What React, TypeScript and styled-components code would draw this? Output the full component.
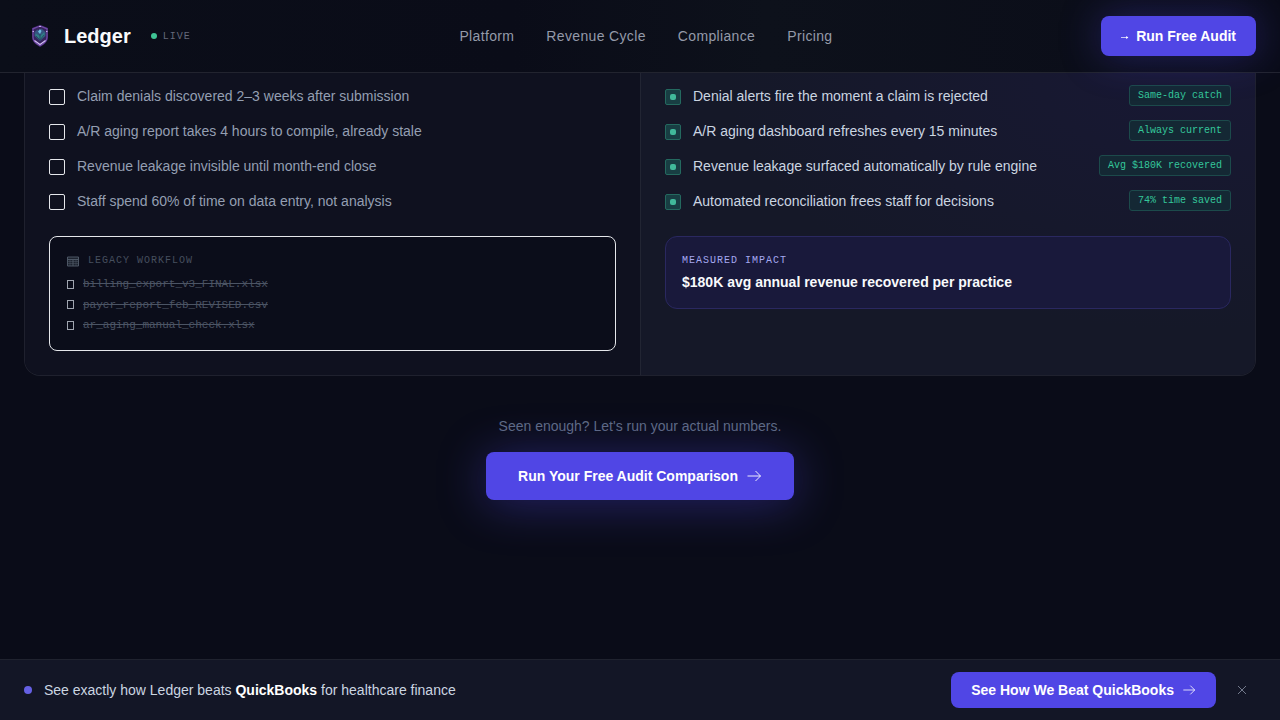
import React from "react";
import styled, { createGlobalStyle } from "styled-components";

const sans = `"Liberation Sans", Arial, sans-serif`;
const mono = `"Liberation Mono", "Courier New", monospace`;

const GlobalStyle = createGlobalStyle`
  *, *::before, *::after { box-sizing: border-box; }
  body { margin: 0; background: #0a0c18; color: #f1f5f9; font-family: ${sans}; font-size: 14px; line-height: 22px; }
  button, input { font: inherit; margin: 0; }
  ul { list-style: none; margin: 0; padding: 0; }
  p { margin: 0; }
`;

const Page = styled.div`
  display: flex;
  flex-direction: column;
  min-height: 100vh;
`;

const Header = styled.header`
  position: sticky;
  top: 0;
  z-index: 2;
  display: flex;
  align-items: center;
  justify-content: space-between;
  padding: 16px 24px;
  background: linear-gradient(90deg, #0b0e19, #0a0c18 40%, #0d111b 60%, #0a0c18);
  border-bottom: 1px solid #22242f;
`;

const Brand = styled.a`
  display: flex;
  align-items: center;
  gap: 8px;
  color: #f8fafc;
  font-size: 20px;
  font-weight: 700;
  line-height: 28px;
  text-decoration: none;
`;

const BrandGroup = styled.div`
  display: flex;
  align-items: center;
  gap: 20px;
`;

const Live = styled.span`
  display: flex;
  align-items: center;
  gap: 6px;
  color: #64687a;
  font: 10px/15px ${mono};
  letter-spacing: 1px;
`;

const Dot = styled.span<{ $size: number; $color: string }>`
  flex: none;
  width: ${(p) => p.$size}px;
  height: ${(p) => p.$size}px;
  border-radius: 50%;
  background: ${(p) => p.$color};
`;

const Nav = styled.nav`
  display: flex;
  gap: 32px;
`;

const NavLink = styled.a`
  color: #949aa9;
  letter-spacing: 0.025em;
  text-decoration: none;
`;

const PrimaryButton = styled.button<{ $height: number; $pad: number; $glow?: string }>`
  display: inline-flex;
  align-items: center;
  gap: 8px;
  height: ${(p) => p.$height}px;
  padding: 0 ${(p) => p.$pad}px;
  border: 0;
  border-radius: 8px;
  background: #5046e5;
  box-shadow: ${(p) => p.$glow || "none"};
  color: #fff;
  font-weight: 700;
  white-space: nowrap;
  cursor: pointer;
`;

const Main = styled.main`
  flex: 1;
  padding: 0 24px;
`;

const Comparison = styled.section`
  display: grid;
  grid-template-columns: 1fr 1fr;
  overflow: hidden;
  border: 1px solid #1f212e;
  border-top: 0;
  border-radius: 0 0 16px 16px;
`;

const Column = styled.div<{ $after?: boolean }>`
  display: flex;
  flex-direction: column;
  gap: 24px;
  padding: 11px 24px 24px;
  background: ${(p) =>
    p.$after
      ? "radial-gradient(ellipse at 90% 0, #181834 0, #151828 60%)"
      : "#0f111f"};
  ${(p) => p.$after && "border-left: 1px solid #222533;"}
`;

const CheckList = styled.ul`
  display: flex;
  flex-direction: column;
  gap: 12px;
`;

const CheckItem = styled.li`
  display: flex;
  align-items: center;
  justify-content: space-between;
  gap: 12px;
  min-height: 23px;
`;

const CheckLabel = styled.label<{ $after?: boolean }>`
  display: flex;
  align-items: center;
  gap: 12px;
  color: ${(p) => (p.$after ? "#cbd5e1" : "#949fb2")};
`;

const Tick = styled.input`
  appearance: none;
  display: grid;
  place-items: center;
  flex: none;
  width: 16px;
  height: 16px;
  margin-top: 3px;
  border: 1px solid #e5e7eb;
  border-radius: 2px;
  &:checked {
    border-color: #24695f;
    background: #183e43;
  }
  &:checked::before {
    content: "";
    width: 6px;
    height: 6px;
    border-radius: 2px;
    background: #41b99a;
  }
`;

const Badge = styled.span`
  padding: 2px 8px;
  border: 1px solid #1c4a4b;
  border-radius: 3px;
  background: #142834;
  color: #34c79b;
  font: 10px/15px ${mono};
  white-space: nowrap;
`;

const LegacyPanel = styled.div`
  padding: 16px;
  border: 1px solid #e5e7eb;
  border-radius: 8px;
  background: #0b0d1a;
`;

const ImpactPanel = styled.div`
  padding: 16px;
  border: 1px solid #2a2860;
  border-radius: 12px;
  background: #19193b;
`;

const PanelTitle = styled.p<{ $color: string; $gap: number }>`
  display: flex;
  align-items: center;
  gap: 8px;
  margin-bottom: ${(p) => p.$gap}px;
  color: ${(p) => p.$color};
  font: 10px/15px ${mono};
  letter-spacing: 1px;
`;

const FileList = styled.ul`
  display: flex;
  flex-direction: column;
  gap: 4px;
`;

const FileItem = styled.li`
  display: flex;
  align-items: center;
  gap: 9px;
  padding-left: 1px;
  color: #4b5464;
  font: 11px/1.5 ${mono};
`;

const FileBox = styled.span`
  width: 7px;
  height: 9px;
  border: 1px solid #a0a5b0;
`;

const Impact = styled.p`
  color: #f8fafc;
  font-weight: 700;
  line-height: 20px;
`;

const Cta = styled.section`
  display: flex;
  flex-direction: column;
  align-items: center;
  gap: 15px;
  padding: 39px 0 48px;
  color: #5f6b83;
`;

const Promo = styled.footer`
  position: sticky;
  bottom: 0;
  display: flex;
  align-items: center;
  justify-content: space-between;
  padding: 12px 24px;
  border-top: 1px solid #20232f;
  background: #131626;
`;

const PromoGroup = styled.div`
  display: flex;
  align-items: center;
  gap: 12px;
`;

const PromoText = styled.p`
  color: #cbd5e1;
  strong { color: #fff; }
`;

const CloseButton = styled.button`
  display: grid;
  place-items: center;
  width: 28px;
  height: 28px;
  padding: 0;
  border: 0;
  background: none;
  color: #7d8596;
  cursor: pointer;
`;

const Arrow = ({ size }: { size: number }) => (
  <svg width={size} height={size} viewBox="0 0 16 16" fill="none" stroke="currentColor" strokeWidth="0.9" strokeLinejoin="round" aria-hidden="true">
    <path d="M1.500 8h13M9.500 3l5 5-5 5" />
  </svg>
);

const SmallArrow = () => (
  <svg width="7" height="8" viewBox="0 0 7 8" overflow="visible" fill="none" stroke="currentColor" strokeWidth="0.7" aria-hidden="true">
    <path d="M0 5.500h6.500" />
    <path d="M5.200 4 7.400 5.500 5.200 7z" fill="currentColor" stroke="none" />
  </svg>
);

const Shield = () => (
  <svg width="32" height="32" viewBox="0 0 32 32" fill="none" aria-hidden="true">
    <path d="M16 4.800 8 8v9.200c0 4.300 3.400 7.200 8 9.800 4.600-2.600 8-5.500 8-9.800V8z" fill="#35245c" />
    <path d="M16 6 9 8.800v8.400c0 3.800 3 6.400 7 8.600 4-2.200 7-4.800 7-8.600V8.800z" stroke="#7047a6" strokeWidth="1.300" />
    <path d="m10.500 12 3-2.500 2 2 2-3 4 3.500v4L16 21l-5.500-5z" fill="#355580" />
    <path d="m11.500 13.500 4.500 2.500 4.500-4v4L16 20l-4.500-4z" fill="#2f7f86" />
    <path d="m14 11.500 2-2.500 1.500 2-1.500 3z" fill="#6cbbe0" />
    <path d="m12 16 4 4 4-5M16 14v5" stroke="#27405c" strokeWidth=".8" />
    <path d="m10.500 20.500 5.500 4 5.500-4" stroke="#d3bdf5" strokeWidth="1.100" />
    <path d="M8.500 11.500H10M22 11.500h1.500M15 6.500h2" stroke="#c4a8e8" />
  </svg>
);

const Sheet = () => (
  <svg width="14" height="14" viewBox="0 0 14 14" fill="none" stroke="#4c5665" aria-hidden="true">
    <path d="M1.500 3h11v9h-11z" fill="#1d232f" />
    <path d="M1.500 5.500h11M7 5.500V12" />
    <path d="M4 5.500V12M10 5.500V12M2 7.500h10M2 9.500h10" strokeWidth=".5" />
  </svg>
);

const before = [
  "Claim denials discovered 2–3 weeks after submission",
  "A/R aging report takes 4 hours to compile, already stale",
  "Revenue leakage invisible until month-end close",
  "Staff spend 60% of time on data entry, not analysis",
];

const after = [
  ["Denial alerts fire the moment a claim is rejected", "Same-day catch"],
  ["A/R aging dashboard refreshes every 15 minutes", "Always current"],
  ["Revenue leakage surfaced automatically by rule engine", "Avg $180K recovered"],
  ["Automated reconciliation frees staff for decisions", "74% time saved"],
];

const files = ["billing_export_v3_FINAL.xlsx", "payer_report_feb_REVISED.csv", "ar_aging_manual_check.xlsx"];

export default function App() {
  return (
    <Page>
      <GlobalStyle />
      <Header>
        <BrandGroup>
          <Brand href="#">
            <Shield />
            Ledger
          </Brand>
          <Live>
            <Dot $size={6} $color="#3fc495" />
            LIVE
          </Live>
        </BrandGroup>
        <Nav>
          {["Platform", "Revenue Cycle", "Compliance", "Pricing"].map((n) => (
            <NavLink key={n} href="#">{n}</NavLink>
          ))}
        </Nav>
        <PrimaryButton $height={40} $pad={20} $glow="0 0 40px rgba(79, 70, 229, 0.35)">
          <SmallArrow />
          Run Free Audit
        </PrimaryButton>
      </Header>

      <Main>
        <Comparison>
          <Column>
            <CheckList>
              {before.map((t) => (
                <CheckItem key={t}>
                  <CheckLabel>
                    <Tick type="checkbox" />
                    {t}
                  </CheckLabel>
                </CheckItem>
              ))}
            </CheckList>
            <LegacyPanel>
              <PanelTitle $color="#464f5e" $gap={8}>
                <Sheet />
                LEGACY WORKFLOW
              </PanelTitle>
              <FileList>
                {files.map((f) => (
                  <FileItem key={f}>
                    <FileBox />
                    <s>{f}</s>
                  </FileItem>
                ))}
              </FileList>
            </LegacyPanel>
          </Column>
          <Column $after>
            <CheckList>
              {after.map(([t, badge]) => (
                <CheckItem key={t}>
                  <CheckLabel $after>
                    <Tick type="checkbox" defaultChecked />
                    {t}
                  </CheckLabel>
                  <Badge>{badge}</Badge>
                </CheckItem>
              ))}
            </CheckList>
            <ImpactPanel>
              <PanelTitle $color="#a5a8f0" $gap={4}>MEASURED IMPACT</PanelTitle>
              <Impact>$180K avg annual revenue recovered per practice</Impact>
            </ImpactPanel>
          </Column>
        </Comparison>

        <Cta>
          <p>Seen enough? Let's run your actual numbers.</p>
          <PrimaryButton $height={48} $pad={32} $glow="0 4px 48px rgba(79, 70, 229, 0.4)">
            Run Your Free Audit Comparison
            <Arrow size={16} />
          </PrimaryButton>
        </Cta>
      </Main>

      <Promo>
        <PromoGroup>
          <Dot $size={8} $color="#6560e3" />
          <PromoText>
            See exactly how Ledger beats <strong>QuickBooks</strong> for healthcare finance
          </PromoText>
        </PromoGroup>
        <PromoGroup>
          <PrimaryButton $height={36} $pad={20}>
            See How We Beat QuickBooks
            <Arrow size={14} />
          </PrimaryButton>
          <CloseButton aria-label="Dismiss">
            <svg width="10" height="10" viewBox="0 0 10 10" stroke="currentColor" strokeWidth=".9" aria-hidden="true">
              <path d="m1 1 8 8M9 1 1 9" />
            </svg>
          </CloseButton>
        </PromoGroup>
      </Promo>
    </Page>
  );
}
